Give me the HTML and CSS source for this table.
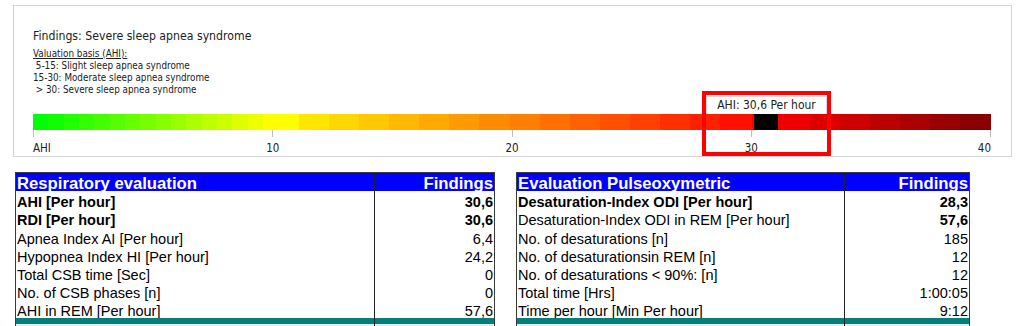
FILE: index.html
```html
<!DOCTYPE html>
<html lang="en">
<head>
<meta charset="utf-8">
<title>Sleep apnea findings</title>
<link rel="stylesheet" href="styles.css">
</head>
<body>
<div class="panel">
  <div class="findings">Findings: Severe sleep apnea syndrome</div>
  <div class="basis">
    <div class="basis-title">Valuation basis (AHI):</div>
    <div class="basis-line"> 5-15: Slight sleep apnea syndrome</div>
    <div class="basis-line">15-30: Moderate sleep apnea syndrome</div>
    <div class="basis-line"> &gt; 30: Severe sleep apnea syndrome</div>
  </div>
  <div class="chart">
    <div class="bar">
      <div class="marker"></div>
      <div class="value-label">AHI: 30,6 Per hour</div>
      <div class="highlight"></div>
    </div>
    <div class="axis">
      <div class="tick first"><i></i><span>AHI</span></div>
      <div class="tick"><i></i><span>10</span></div>
      <div class="tick"><i></i><span>20</span></div>
      <div class="tick"><i></i><span>30</span></div>
      <div class="tick last"><i></i><span>40</span></div>
    </div>
  </div>
</div>

<div class="tables">
  <div class="table resp">
    <div class="c1 head">Respiratory evaluation</div><div class="c2 head">Findings</div>
    <div class="c1 b">AHI [Per hour]</div><div class="c2 b">30,6</div>
    <div class="c1 b">RDI [Per hour]</div><div class="c2 b">30,6</div>
    <div class="c1">Apnea Index AI [Per hour]</div><div class="c2">6,4</div>
    <div class="c1">Hypopnea Index HI [Per hour]</div><div class="c2">24,2</div>
    <div class="c1">Total CSB time [Sec]</div><div class="c2">0</div>
    <div class="c1">No. of CSB phases [n]</div><div class="c2">0</div>
    <div class="c1">AHI in REM [Per hour]</div><div class="c2">57,6</div>
    <div class="c1 teal"></div><div class="c2 teal"></div>
    <div class="c1 pale"></div><div class="c2 pale"></div>
  </div>
  <div class="table pulse">
    <div class="c1 head">Evaluation Pulseoxymetric</div><div class="c2 head">Findings</div>
    <div class="c1 b">Desaturation-Index ODI [Per hour]</div><div class="c2 b">28,3</div>
    <div class="c1">Desaturation-Index ODI in REM [Per hour]</div><div class="c2 b">57,6</div>
    <div class="c1">No. of desaturations [n]</div><div class="c2">185</div>
    <div class="c1">No. of desaturationsin REM [n]</div><div class="c2">12</div>
    <div class="c1">No. of desaturations &lt; 90%: [n]</div><div class="c2">12</div>
    <div class="c1">Total time [Hrs]</div><div class="c2">1:00:05</div>
    <div class="c1">Time per hour [Min Per hour]</div><div class="c2">9:12</div>
    <div class="c1 teal"></div><div class="c2 teal"></div>
    <div class="c1 pale"></div><div class="c2 pale"></div>
  </div>
</div>
</body>
</html>
```

FILE: styles.css
```css
html, body {
  margin: 0;
  background: #fff;
}
body {
  font-family: "Liberation Sans", Arial, sans-serif;
  color: #000;
  overflow: hidden;
}

/* ---------- top findings panel ---------- */
.panel {
  margin: 5px 12px 0 13px;
  height: 152px;
  box-sizing: border-box;
  border: 1px solid #d4d4d4;
  padding: 23px 20px 0 19px;
  font-family: "DejaVu Sans Condensed", "DejaVu Sans", sans-serif;
  color: #222;
}
.findings {
  font-size: 12.2px;
  line-height: 14px;
}
.basis {
  margin-top: 4.5px;
  font-size: 9.8px;
  line-height: 12px;
}
.basis-line {
  white-space: pre;
}
.basis-title {
  text-decoration: underline;
}
.chart {
  margin-top: 18.5px;
}
.bar {
  position: relative;
  height: 16px;
  background: linear-gradient(to right,
    #00ff00 0 15.3px, #11ff00 15.3px 30.7px, #22ff00 30.7px 46px, #33ff00 46px 61.3px,
    #44ff00 61.3px 76.7px, #55ff00 76.7px 92px, #66ff00 92px 107.3px, #77ff00 107.3px 122.7px,
    #88ff00 122.7px 138px, #99ff00 138px 153.3px, #aaff00 153.3px 168.7px, #bbff00 168.7px 184px,
    #ccff00 184px 199.3px, #ddff00 199.3px 214.7px, #eeff00 214.7px 230px, #ffff00 230px 266px,
    #ffe600 266px 296px, #ffd700 296px 326px, #ffc800 326px 356px, #ffb900 356px 386px,
    #ffaa00 386px 416px, #ff9b00 416px 446px, #ff8c00 446px 477px, #ff8000 477px 507px,
    #ff7000 507px 537px, #ff6000 537px 567px, #ff5000 567px 597px, #ff4000 597px 627px,
    #ff3000 627px 657px, #ff2000 657px 687px, #ff1000 687px 719px, #ff0000 719px 745px,
    #ee0000 745px 777px, #dd0000 777px 807px, #cc0000 807px 837px, #bb0000 837px 867px,
    #aa0000 867px 897px, #990000 897px 927px, #880000 927px 958px);
}
.marker {
  position: absolute;
  left: 721px;
  top: 0;
  width: 24px;
  height: 16px;
  background: #000;
}
.value-label {
  position: absolute;
  left: 673px;
  top: -18px;
  width: 121px;
  height: 18px;
  box-sizing: border-box;
  border: 1px solid #dcdcdc;
  border-bottom: none;
  background: #fff;
  font-size: 12px;
  line-height: 17px;
  text-align: center;
  color: #222;
}
.highlight {
  position: absolute;
  left: 669px;
  top: -23px;
  width: 129px;
  height: 65px;
  box-sizing: border-box;
  border: 4px solid #ff0000;
}
.axis {
  display: flex;
  justify-content: space-between;
}
.tick {
  width: 1px;
  display: flex;
  flex-direction: column;
  align-items: center;
}
.tick i {
  display: block;
  width: 1px;
  height: 7px;
  background: #bdbdbd;
}
.tick span {
  margin-top: 4.7px;
  font-size: 11.5px;
  line-height: 13px;
  white-space: nowrap;
  color: #222;
}
.tick.first {
  align-items: flex-start;
}
.tick.last {
  align-items: flex-end;
}

/* ---------- tables ---------- */
.tables {
  display: flex;
  gap: 21px;
  margin: 15px 0 0 15px;
}
.table {
  display: grid;
  box-sizing: border-box;
  border: 1px solid #3a3a3a;
  border-bottom: none;
  font-size: 14.5px;
}
.resp {
  width: 480px;
  grid-template-columns: 359px 1fr;
}
.pulse {
  width: 454px;
  grid-template-columns: 328px 1fr;
}
.c1, .c2 {
  height: 18.2px;
  display: flex;
  align-items: flex-end;
  line-height: 13px;
  white-space: nowrap;
}
.c1 {
  border-right: 1px solid #222;
  padding-left: 1px;
}
.c2 {
  justify-content: flex-end;
  padding-right: 1px;
}
.head {
  height: 18px;
  background: #0000ff;
  color: #fff;
  font-weight: bold;
  font-size: 16.7px;
  line-height: 15px;
}
.b {
  font-weight: bold;
}
.teal {
  height: 6px;
  background: #067f7a;
}
.pale {
  height: 12px;
  background: #dff2f2;
}
```
